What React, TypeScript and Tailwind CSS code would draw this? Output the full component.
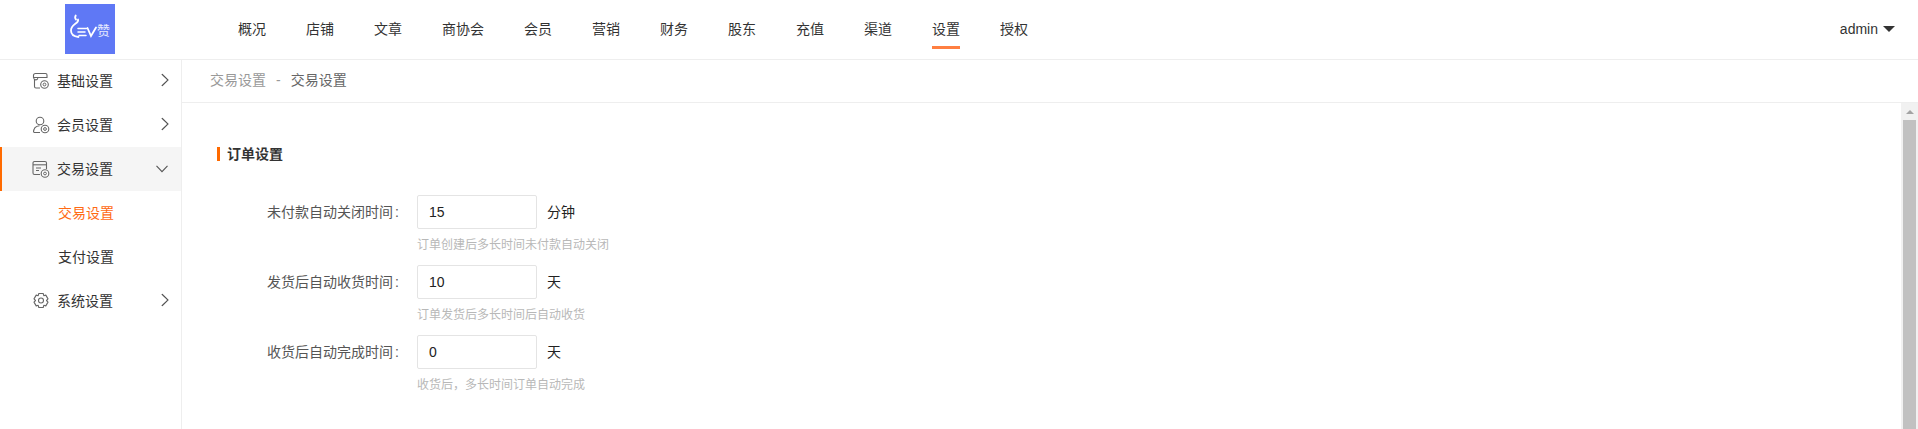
const font = 'font-["Liberation_Sans","Noto_Sans_CJK_SC",sans-serif]';
const navs = ['概况','店铺','文章','商协会','会员','营销','财务','股东','充值','渠道','设置','授权'];

function Logo() {
  return (
    <div className="relative w-[50px] h-[50px] bg-[#5f78f5]">
      <svg className="absolute left-0 top-0" width="50" height="50" viewBox="0 0 50 50" fill="none" stroke="#fff" strokeWidth="1.800" strokeLinecap="round">
        <path d="M13 15.500c.8 2.200-1 3.200-3 4.500-2.500 1.800-4 3.800-4 6.500 0 3.800 3 6 7.500 6.500" />
        <path d="M11 15.500c-1-1-1.200-2.300-.3-4" />
        <path d="M13 24.500h8.500M13 28h7M14 31.500h7" strokeWidth="1.500" />
        <path d="M22.500 24l3.500 8 5-8.500" />
      </svg>
      <span className={`absolute left-[32px] top-[20px] text-[13px] leading-[14px] text-white/85 ${font}`}>赞</span>
    </div>
  );
}

function Chevron({ down }: { down?: boolean }) {
  return down ? (
    <svg width="12" height="8" viewBox="0 0 12 8" fill="none" stroke="#555" strokeWidth="1.100"><path d="M.5 .8 6 6.600 11.500 .8" /></svg>
  ) : (
    <svg width="8" height="13" viewBox="0 0 8 13" fill="none" stroke="#555" strokeWidth="1.100"><path d="M.8 .5 7 6.500 .8 12.500" /></svg>
  );
}

function Badge({ cx, cy }: { cx: number; cy: number }) {
  return (
    <g>
      <circle cx={cx} cy={cy} r="3.800" fill="#fff" stroke="#666" strokeWidth="1.100" />
      <circle cx={cx} cy={cy} r="1.400" stroke="#666" strokeWidth="1" />
    </g>
  );
}

function Icon({ kind }: { kind: string }) {
  return (
    <svg width="18" height="18" viewBox="0 0 18 18" fill="none" stroke="#666" strokeWidth="1.100">
      {kind === 'base' && (
        <>
          <path d="M3.500 1.500h10a1.500 1.500 0 0 1 1.500 1.500v2.500H1.500V3a2 2 0 0 1 2-1.500z" />
          <path d="M1.500 5.500c.3 1.600 1.200 2.400 2.300 2.400s2-.8 2.300-2.400" />
          <path d="M2.500 8v6.500a1.500 1.500 0 0 0 1.500 1.500h4" />
          <Badge cx={12.500} cy={12.500} />
        </>
      )}
      {kind === 'user' && (
        <>
          <circle cx="8" cy="5" r="3.800" />
          <path d="M1.500 16.500c0-4 2.500-6.500 6-6.800M2 16.500h6" />
          <Badge cx={13} cy={13} />
        </>
      )}
      {kind === 'trade' && (
        <>
          <path d="M8 14.500H2.500a1.500 1.500 0 0 1-1.500-1.500V3a1.500 1.500 0 0 1 1.500-1.500h10.500A1.500 1.500 0 0 1 14.500 3v6" />
          <path d="M1 4.800h13.500" />
          <path d="M4 8h5M4 10.500h3" />
          <Badge cx={13} cy={13.500} />
        </>
      )}
      {kind === 'gear' && (
        <>
          <path d="M6.800 1.500h4.400l.6 2.200 2-.6 2.200 3.800-1.500 1.600 1.500 1.600-2.200 3.800-2-.6-.6 2.200H6.800l-.6-2.200-2 .6L2 10.100l1.500-1.600L2 6.900l2.200-3.800 2 .6z" strokeLinejoin="round" />
          <circle cx="9" cy="8.500" r="2.500" />
        </>
      )}
    </svg>
  );
}

function MenuItem({ icon, label, open }: { icon: string; label: string; open?: boolean }) {
  return (
    <div className={`relative h-[44px] flex items-center ${open ? 'bg-[#f5f5f5]' : ''}`}>
      {open && <div className="absolute left-0 top-0 bottom-0 w-[2px] bg-[#ff6a00]" />}
      <div className="ml-[32px] w-[25px] shrink-0"><Icon kind={icon} /></div>
      <span className="text-[14px] text-[#333]">{label}</span>
      <div className={`absolute -translate-y-1/2 ${open ? 'top-1/2 left-[156px]' : 'top-[calc(50%-1px)] left-[161px]'}`}><Chevron down={open} /></div>
    </div>
  );
}

function Row({ label, value, unit, help }: { label: string; value: string; unit: string; help: string }) {
  return (
    <div className="flex mb-[12px]">
      <div className="w-[200px] pr-[18px] h-[34px] leading-[34px] text-right text-[14px] text-[#555]">{label}<span className="ml-[2px]">:</span></div>
      <div>
        <div className="flex items-center">
          <div className="w-[120px] h-[34px] border border-[#e4e4e4] rounded-[2px] pl-[11px] leading-[32px] text-[14px] text-[#222]">{value}</div>
          <span className="ml-[10px] text-[14px] text-[#222]">{unit}</span>
        </div>
        <div className="mt-[9px] h-[15px] leading-[15px] text-[12px] text-[#b8b8b8]">{help}</div>
      </div>
    </div>
  );
}

export default function App() {
  return (
    <div className={`w-full h-[429px] overflow-hidden bg-white flex flex-col ${font}`}>
      <header className="h-[60px] shrink-0 border-b border-[#eee] flex items-start">
        <div className="w-[238px] shrink-0 pl-[65px] pt-[4px]"><Logo /></div>
        <nav className="flex gap-[40px]">
          {navs.map((n) => (
            <div key={n} className={`h-[49px] pt-[20px] text-[14px] leading-[19px] text-[#333] ${n === '设置' ? 'border-b-[3px] border-[#ff7f41]' : ''}`}>{n}</div>
          ))}
        </nav>
        <div className="ml-auto mr-[23px] h-[58px] flex items-center text-[14px] text-[#333]">
          admin
          <span className="ml-[5px] w-0 h-0 border-x-[6px] border-x-transparent border-t-[6px] border-t-[#333]" />
        </div>
      </header>
      <div className="flex-1 flex min-h-0">
        <aside className="w-[182px] shrink-0 -mt-px border-r border-[#eee]">
          <MenuItem icon="base" label="基础设置" />
          <MenuItem icon="user" label="会员设置" />
          <MenuItem icon="trade" label="交易设置" open />
          <div className="h-[44px] pl-[58px] flex items-center text-[14px] text-[#ff6a13]">交易设置</div>
          <div className="h-[44px] pl-[58px] flex items-center text-[14px] text-[#333]">支付设置</div>
          <MenuItem icon="gear" label="系统设置" />
        </aside>
        <main className="flex-1 min-w-0 flex flex-col">
          <div className="h-[43px] shrink-0 border-b border-[#eee] pl-[28px] flex items-center text-[14px] text-[#666] pb-[2px]">
            <span className="text-[#999]">交易设置</span>
            <span className="mx-[10px] text-[#999]">-</span>
            <span>交易设置</span>
          </div>
          <div className="flex-1 flex min-h-0">
            <div className="flex-1 min-w-0 pl-[35px] pt-[44px]">
              <div className="flex items-center h-[14px] mb-[34px]">
                <div className="w-[3px] h-[14px] bg-[#ff6a00]" />
                <span className="ml-[7px] text-[14px] font-bold text-[#333]">订单设置</span>
              </div>
              <Row label="未付款自动关闭时间" value="15" unit="分钟" help="订单创建后多长时间未付款自动关闭" />
              <Row label="发货后自动收货时间" value="10" unit="天" help="订单发货后多长时间后自动收货" />
              <Row label="收货后自动完成时间" value="0" unit="天" help="收货后，多长时间订单自动完成" />
            </div>
            <div className="w-[17px] shrink-0 bg-[#f1f1f1] flex flex-col items-center">
              <div className="h-[17px] flex items-center justify-center">
                <span className="w-0 h-0 border-x-[4px] border-x-transparent border-b-[4px] border-b-[#a3a3a3]" />
              </div>
              <div className="flex-1 w-[13px] bg-[#c1c1c1]" />
            </div>
          </div>
        </main>
      </div>
    </div>
  );
}
